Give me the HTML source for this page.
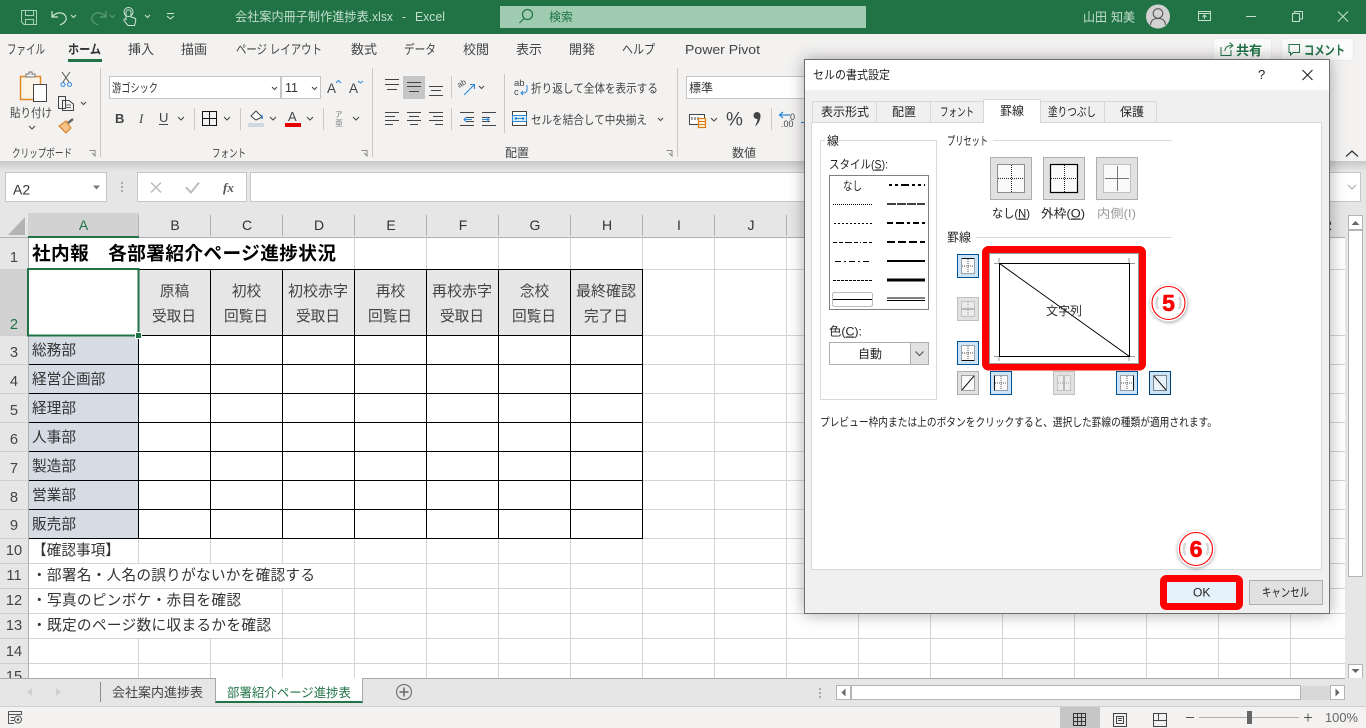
<!DOCTYPE html>
<html lang="ja"><head><meta charset="utf-8"><title>会社案内冊子制作進捗表.xlsx - Excel</title>
<style>
html,body{margin:0;padding:0;width:1366px;height:728px;overflow:hidden;background:#fff}
svg{display:block}
text{font-family:"Liberation Sans","Noto Sans CJK JP",sans-serif;font-size:12px;fill:#444;white-space:pre}
.c{font-size:14.67px;fill:#333}
.h{font-size:14.67px;fill:#444;text-anchor:middle}
.r{font-size:14.67px;fill:#444;text-anchor:middle}
.g{font-size:14px;fill:#333;text-anchor:middle}
.n{font-size:13px;fill:#444}
.d{font-size:12px;fill:#222}
.w{font-size:12.5px;fill:#c4dfcf}
.chev{fill:none;stroke:#444;stroke-width:1}
.ic{fill:none;stroke:#444;stroke-width:1}
</style></head><body>
<svg width="1366" height="728" viewBox="0 0 1366 728" xmlns="http://www.w3.org/2000/svg">
<defs>
<filter id="sh" x="-10%" y="-10%" width="120%" height="120%"><feGaussianBlur stdDeviation="8"/></filter>
<filter id="sh2" x="-30%" y="-30%" width="160%" height="160%"><feGaussianBlur stdDeviation="1.5"/></filter>
<linearGradient id="rs" x1="0" y1="0" x2="0" y2="1"><stop offset="0" stop-color="#000" stop-opacity=".13"/><stop offset="1" stop-color="#000" stop-opacity="0"/></linearGradient>
<clipPath id="gc"><rect x="0" y="213" width="1345" height="465"/></clipPath>
<symbol id="mini" viewBox="0 0 22 24" width="22" height="24">
<rect x="4.5" y="4.5" width="13" height="15" fill="#fafafa" stroke="#555" stroke-width="1" stroke-dasharray="1 1"/>
<path d="M11 5V19M5 12H17" stroke="#555" stroke-width="1" stroke-dasharray="1 1" fill="none"/>
</symbol>
</defs>

<!-- base -->
<rect width="1366" height="728" fill="#fff"/>
<rect y="0" width="1366" height="34" fill="#217346"/>
<rect y="34" width="1366" height="127" fill="#f3f2f1"/>
<rect y="161" width="1366" height="52" fill="#e6e6e6"/>
<rect y="161" width="1366" height="10" fill="url(#rs)"/>

<!-- title bar -->
<g fill="none" stroke="#a9d2ba" stroke-width="1">
<path d="M21.5 10.5H36.5V24.5H24L21.5 22Z"/><path d="M25.5 10.5V15.5H33.5V10.5M25.5 24.5V19.5H33.5V24.5"/>
<path d="M52 11V17H58M52.5 16.5C56 12 63 11.5 65.5 16C67.5 19.5 65 23 60 25" stroke="#d0e5d8" stroke-width="1.2"/>
<path d="M71 15L73.5 17.5L76 15" stroke="#d0e5d8"/>
<path d="M106 11V17H100M105.5 16.5C102 12 95 11.5 92.5 16C90.5 19.5 93 23 98 25" stroke="#5d9b78" stroke-width="1.2"/>
<path d="M110 15L112.5 17.5L115 15" stroke="#5d9b78"/>
<path d="M126 16V12.5C126 9 131 9 131 12.5V17L134.5 18C136 18.5 136 20 135.5 22L134.5 25.5H128L124 20.5C123.5 19 125 18.5 126 19.5Z" stroke="#d0e5d8"/>
<circle cx="128.5" cy="12" r="4.5" stroke="#d0e5d8"/>
<path d="M145 15L147.5 17.5L150 15" stroke="#d0e5d8"/>
<path d="M167 13.5H174M167 16L170.5 19L174 16" stroke="#d0e5d8"/>
</g>
<text x="235" y="21" class="w" textLength="158" lengthAdjust="spacingAndGlyphs">会社案内冊子制作進捗表.xlsx</text>
<text x="402" y="21" class="w">-</text>
<text x="415" y="21" class="w" textLength="30" lengthAdjust="spacingAndGlyphs">Excel</text>
<rect x="500" y="6" width="366" height="22" fill="#9fcbb1"/>
<circle cx="527.5" cy="14.5" r="5" fill="none" stroke="#217346" stroke-width="1.2"/><path d="M524 18.5L519.5 23" stroke="#217346" stroke-width="1.2"/>
<text x="549" y="21" font-size="12" style="fill:#217346">検索</text>
<text x="1083" y="21.5" class="w" textLength="24" lengthAdjust="spacingAndGlyphs">山田</text>
<text x="1111" y="21.5" class="w" textLength="24" lengthAdjust="spacingAndGlyphs">知美</text>
<circle cx="1158" cy="16.5" r="12" fill="#d2d2d2"/>
<circle cx="1158" cy="13.5" r="4.8" fill="none" stroke="#555" stroke-width="1.1"/><path d="M1150.5 25C1151 19.5 1154 18.5 1158 18.5C1162 18.5 1165 19.5 1165.5 25" fill="none" stroke="#555" stroke-width="1.1"/>
<g fill="none" stroke="#c4dfcf">
<path d="M1198.5 11.5H1210.5V20.5H1198.5ZM1198.5 13.5H1210.5M1204.5 19V15M1202.5 17L1204.5 15L1206.5 17"/>
<path d="M1246 16.5H1256"/>
<path d="M1292.5 13.5H1299.5V21.5H1292.5ZM1294.5 13.5V11.5H1302.5V19H1299.5"/>
<path d="M1338 11.5L1348 21.5M1348 11.5L1338 21.5"/>
</g>

<!-- ribbon tabs -->
<text x="7" y="54" class="n" textLength="38" lengthAdjust="spacingAndGlyphs">ファイル</text>
<text x="68" y="54" class="n" textLength="33" lengthAdjust="spacingAndGlyphs" style="font-weight:700;fill:#333">ホーム</text>
<rect x="68" y="59" width="34" height="3" fill="#217346"/>
<text x="128" y="54" class="n">挿入</text>
<text x="181" y="54" class="n">描画</text>
<text x="236" y="54" class="n" textLength="86" lengthAdjust="spacingAndGlyphs">ページ レイアウト</text>
<text x="351" y="54" class="n">数式</text>
<text x="404" y="54" class="n" textLength="32" lengthAdjust="spacingAndGlyphs">データ</text>
<text x="463" y="54" class="n">校閲</text>
<text x="516" y="54" class="n">表示</text>
<text x="569" y="54" class="n">開発</text>
<text x="622" y="54" class="n" textLength="33" lengthAdjust="spacingAndGlyphs">ヘルプ</text>
<text x="685" y="54" class="n" textLength="75" lengthAdjust="spacingAndGlyphs">Power Pivot</text>
<rect x="1213.5" y="38.5" width="58" height="22" rx="1" fill="#fbfbfb" stroke="#ebebeb"/>
<rect x="1281.5" y="38.5" width="72" height="22" rx="1" fill="#fbfbfb" stroke="#ebebeb"/>
<path d="M1221 47V55.5H1231V50M1225 51C1225 47 1228 45.5 1232 45.5M1229.5 42.5L1233 45.5L1229.5 48.5" fill="none" stroke="#217346"/>
<text x="1236" y="55" class="n" style="font-weight:700;fill:#217346">共有</text>
<path d="M1289 44.5H1299.5V52.5H1293L1290.5 55V52.5H1289Z" fill="none" stroke="#217346"/>
<text x="1304" y="55" class="n" textLength="41" lengthAdjust="spacingAndGlyphs" style="font-weight:700;fill:#217346">コメント</text>

<!-- ribbon separators -->
<g stroke="#c8c8c8"><path d="M100.5 68V157M372.5 68V157M677.5 68V157"/><path d="M194.5 108V130M240.5 108V130M323.5 108V130M451.5 76V98M451.5 108V130M504.5 74V133M771.5 108V130"/></g>

<!-- clipboard -->
<rect x="20.5" y="76.5" width="20" height="23" fill="#fdf3e6" stroke="#e08a26" stroke-width="1.5"/>
<path d="M26 77V74H29V72H32V74H35V77Z" fill="#f3f2f1" stroke="#777"/>
<rect x="33.5" y="84.5" width="13" height="17" fill="#fff" stroke="#444"/>
<text x="10" y="117" style="font-size:12px" textLength="42" lengthAdjust="spacingAndGlyphs">貼り付け</text>
<path d="M29 126L32 129L35 126" class="chev"/>
<text x="12" y="157" style="font-size:11.5px" textLength="60" lengthAdjust="spacingAndGlyphs">クリップボード</text>
<path d="M62 72L69 82M70 72L63 82" stroke="#555" fill="none"/><circle cx="63" cy="84.5" r="2" fill="none" stroke="#2b88d8"/><circle cx="69.5" cy="84.5" r="2" fill="none" stroke="#2b88d8"/>
<path d="M58.5 96.5H65.5V108.5H58.5Z M62.5 100.5H69L73.5 104V110.5H62.5Z" fill="#f3f2f1" stroke="#444"/><path d="M65 105H71M65 107.5H71" stroke="#666"/>
<path d="M81 102L83.5 104.5L86 102" class="chev"/>
<path d="M59 126L66 121L71 128L66 133Z" fill="#f2c185" stroke="#d9791c"/><path d="M68 123L73 119" stroke="#666" stroke-width="2.5"/>
<path d="M89.5 150.5H95V156M92 153L95.5 156.5" fill="none" stroke="#888"/>

<!-- font -->
<rect x="109.5" y="76.5" width="171" height="22" fill="#fff" stroke="#c6c6c6"/>
<rect x="281.5" y="76.5" width="39" height="22" fill="#fff" stroke="#c6c6c6"/>
<text x="112" y="92" style="font-size:12px;fill:#333" textLength="46" lengthAdjust="spacingAndGlyphs">游ゴシック</text>
<text x="285" y="92" style="font-size:12.5px;fill:#333">11</text>
<path d="M272 87L274.5 89.5L277 87M312 87L314.5 89.5L317 87" class="chev"/>
<text x="327" y="93" style="font-size:13.5px">A</text><path d="M336 83L338.5 80.5L341 83" fill="none" stroke="#2b88d8"/>
<text x="349" y="93" style="font-size:13.5px">A</text><path d="M358 81L360.5 83L363 81" fill="none" stroke="#2b88d8"/>
<text x="115" y="123" style="font-size:13px;font-weight:700">B</text>
<text x="139" y="123" style="font-family:'Liberation Serif',serif;font-size:13px;font-style:italic">I</text>
<text x="159" y="122" style="font-size:13px">U</text><path d="M159 124.5H168" stroke="#444"/>
<path d="M178 117L181 120L184 117M224 117L227 120L230 117M270 117L273 120L276 117M307 117L310 120L313 117M353 117L356 120L359 117" class="chev"/>
<path d="M202.5 111.5H216.5V125.5H202.5ZM209.5 111.5V125.5M202.5 118.5H216.5" fill="none" stroke="#111"/>
<path d="M251 116L256 111L262 117L256 120Z" fill="#fff" stroke="#444"/><path d="M262 115V119" stroke="#2b88d8" stroke-width="1.5"/>
<rect x="248" y="123" width="16" height="4" fill="#cfd8e1"/>
<text x="288" y="121" style="font-size:13px">A</text><rect x="285" y="123" width="16" height="4" fill="#e60000"/>
<text x="335" y="117" style="font-size:7.5px;fill:#777">ア</text><text x="335" y="126" style="font-size:8px;fill:#888">亜</text>
<text x="212" y="157" style="font-size:11.5px" textLength="34" lengthAdjust="spacingAndGlyphs">フォント</text>
<path d="M361.5 150.5H367V156M364 153L367.5 156.5" fill="none" stroke="#888"/>

<!-- alignment -->
<rect x="403" y="76" width="22" height="23" fill="#c6c6c6"/>
<g stroke="#444" fill="none">
<path d="M385 79.5H399M385 84.5H399M387 89.5H397"/>
<path d="M407 82.5H421M407 86.5H421M409 91.5H419"/>
<path d="M429 86.5H443M431 90.5H441M429 95.5H443"/>
<path d="M385 112.5H399M385 116.5H395M385 120.5H399M385 124.5H393"/>
<path d="M407 112.5H421M409 116.5H419M407 120.5H421M410 124.5H418"/>
<path d="M429 112.5H443M433 116.5H443M429 120.5H443M435 124.5H443"/>
<path d="M460 112.5H474M466 117.5H474M466 121.5H474M460 125.5H474"/>
<path d="M482 112.5H496M482 117.5H490M482 121.5H490M482 125.5H496"/>
<path d="M479 86L481.5 88.5L484 86M658 118L660.5 120.5L663 118"/>
</g>
<path d="M472 119.5H464M466.5 117L464 119.5L466.5 122M482 119.5H489M486.5 117L489 119.5L486.5 122" stroke="#2b88d8" fill="none"/>
<text x="459" y="88" style="font-size:8px;fill:#444" transform="rotate(-30 459 88)">ab</text>
<path d="M464 95L474 85M470 84.5H474.5V89" fill="none" stroke="#2b88d8" stroke-width="1.1"/>
<text x="514" y="86" style="font-size:9.5px">ab</text><text x="514" y="95" style="font-size:9.5px">c</text>
<path d="M527 85V90C527 93 524 93 521 93M523 91L521 93L523 95" fill="none" stroke="#2b88d8"/>
<text x="531" y="92.5" style="font-size:12px" textLength="127" lengthAdjust="spacingAndGlyphs">折り返して全体を表示する</text>
<rect x="512.5" y="111.5" width="14" height="14" fill="#fff" stroke="#444"/><rect x="512.5" y="115.5" width="14" height="6" fill="#e2eff9" stroke="#2b88d8"/><path d="M515 118.5H524M516.5 117L515 118.5L516.5 120M522.5 117L524 118.5L522.5 120" stroke="#2b88d8" fill="none"/>
<text x="531" y="124" style="font-size:12px" textLength="116" lengthAdjust="spacingAndGlyphs">セルを結合して中央揃え</text>
<text x="505" y="157" style="font-size:12px">配置</text>
<path d="M666.5 150.5H672V156M669 153L672.5 156.5" fill="none" stroke="#888"/>

<!-- number -->
<rect x="686.5" y="76.5" width="130" height="22" fill="#fff" stroke="#c6c6c6"/>
<text x="689" y="92" style="font-size:12px;fill:#333">標準</text>
<rect x="689.5" y="114.5" width="15" height="10" fill="#fff" stroke="#444"/><path d="M692 117V120M695 117V120M698 117V120" stroke="#444"/>
<rect x="698.5" y="118.5" width="7" height="9" fill="#fdf3e6" stroke="#e07b10" stroke-width="1.2"/><path d="M699 121.5H705M699 124.5H705" stroke="#e07b10"/>
<path d="M711 118L714 121L717 118" class="chev"/>
<text x="726" y="125.500" style="font-size:19px;fill:#444">%</text>
<circle cx="757" cy="115.500" r="3.500" fill="#444"/><path d="M760.500 115.500C760.500 120 758.500 124 755 126.500C756.500 123 757.500 121 757.500 118.500Z" fill="#444"/>
<path d="M779 115H790M783 112L779.500 115L783 118" fill="none" stroke="#2b88d8" stroke-width="1.2"/>
<text x="790" y="120" style="font-size:9px">0</text><text x="781" y="127" style="font-size:9px">.00</text>
<path d="M801 122.500H804" stroke="#2b88d8"/>
<text x="732" y="157" style="font-size:12px">数値</text>
<path d="M1346 156.500L1352 151L1358 156.500" fill="none" stroke="#333" stroke-width="1.2"/>

<!-- formula bar -->
<rect x="5.5" y="172.5" width="101" height="29" fill="#fff" stroke="#c6c6c6"/>
<text x="13" y="194.5" style="font-size:14px;fill:#333">A2</text>
<path d="M93 185.5H100L96.5 189.5Z" fill="#777"/>
<g fill="#aaa"><rect x="121" y="182" width="2" height="2"/><rect x="121" y="186" width="2" height="2"/><rect x="121" y="190" width="2" height="2"/></g>
<rect x="137.5" y="172.5" width="109" height="29" fill="#fff" stroke="#c6c6c6"/>
<path d="M151 182.5L161 192.5M161 182.5L151 192.5" stroke="#bdbdbd" stroke-width="1.5"/>
<path d="M186 187.5L191 192.5L199 182.5" fill="none" stroke="#bdbdbd" stroke-width="2"/>
<text x="223" y="192" style="font-family:'Liberation Serif',serif;font-style:italic;font-weight:700;font-size:13px;fill:#555">fx</text>
<rect x="250.5" y="172.5" width="1110" height="29" fill="#fff" stroke="#c6c6c6"/>
<path d="M1348 185L1352 189L1356 185" fill="none" stroke="#bbb" stroke-width="1.5"/>

<!-- sheet -->
<g clip-path="url(#gc)">
<rect x="0" y="213" width="1345" height="25" fill="#e6e6e6"/>
<rect x="0" y="238" width="28" height="440" fill="#e6e6e6"/>
<polygon points="8,235 25,235 25,217" fill="#b4b4b4"/>
<rect x="28" y="213" width="111" height="23" fill="#d2d2d2"/>
<rect x="0" y="269" width="28" height="67" fill="#d2d2d2"/>
<rect x="139" y="269" width="504" height="66" fill="#e7e6e6"/>
<rect x="28" y="336" width="110" height="202" fill="#d6dce4"/>

<!-- grid -->
<g stroke="#d4d4d4" fill="none">
<path d="M138.5 538V563M138.5 638V678M210.5 538V563M210.5 638V678M282.5 538V563M282.5 588V678"/>
<path d="M354.5 238V678M426.5 238V678M498.5 238V678M570.5 238V678M642.5 238V678M714.5 238V678M786.5 238V678M858.5 238V678M930.5 238V678M1002.5 238V678M1074.5 238V678M1146.5 238V678M1218.5 238V678M1290.5 238V678"/>
<path d="M28 269.5H1345M28 335.5H1345M28 364.5H1345M28 393.5H1345M28 422.5H1345M28 451.5H1345M28 480.5H1345M28 509.5H1345M28 538.5H1345M28 563.5H1345M28 588.5H1345M28 613.5H1345M28 638.5H1345M28 663.5H1345"/>
</g>
<g stroke="#000" fill="none">
<path d="M138.5 269V539M210.5 269V539M282.5 269V539M354.5 269V539M426.5 269V539M498.5 269V539M570.5 269V539M642.5 269V539"/>
<path d="M138 269.5H643M28 335.5H643M28 364.5H643M28 393.5H643M28 422.5H643M28 451.5H643M28 480.5H643M28 509.5H643M28 538.5H643"/>
</g>
<!-- header lines -->
<g stroke="#b0b0b0" fill="none">
<path d="M138.5 215V236M210.5 215V236M282.5 215V236M354.5 215V236M426.5 215V236M498.5 215V236M570.5 215V236M642.5 215V236M714.5 215V236M786.5 215V236M858.5 215V236M930.5 215V236M1002.5 215V236M1074.5 215V236M1146.5 215V236M1218.5 215V236M1290.5 215V236"/>
<path d="M0 237.5H1345M28.5 237V678"/>
</g>
<path d="M0 269.5H28M0 335.5H28M0 364.5H28M0 393.5H28M0 422.5H28M0 451.5H28M0 480.5H28M0 509.5H28M0 538.5H28M0 563.5H28M0 588.5H28M0 613.5H28M0 638.5H28M0 663.5H28" stroke="#cfcfcf" fill="none"/>
<rect x="28" y="236" width="111" height="2" fill="#217346"/>

<!-- column letters -->
<text x="83.5" y="230" class="g" style="fill:#217346">A</text>
<text x="175" y="230" class="g">B</text><text x="247" y="230" class="g">C</text><text x="319" y="230" class="g">D</text><text x="391" y="230" class="g">E</text><text x="463" y="230" class="g">F</text><text x="535" y="230" class="g">G</text><text x="607" y="230" class="g">H</text><text x="679" y="230" class="g">I</text><text x="751" y="230" class="g">J</text><text x="823" y="230" class="g">K</text><text x="895" y="230" class="g">L</text><text x="967" y="230" class="g">M</text><text x="1039" y="230" class="g">N</text><text x="1111" y="230" class="g">O</text><text x="1183" y="230" class="g">P</text><text x="1255" y="230" class="g">Q</text><text x="1327" y="230" class="g">R</text>

<!-- row numbers -->
<text x="14" y="262" class="r">1</text>
<text x="14" y="329" class="r" style="fill:#217346">2</text>
<text x="14" y="357" class="r">3</text><text x="14" y="386" class="r">4</text><text x="14" y="415" class="r">5</text><text x="14" y="444" class="r">6</text><text x="14" y="473" class="r">7</text><text x="14" y="502" class="r">8</text><text x="14" y="530" class="r">9</text>
<text x="14" y="555" class="r">10</text><text x="14" y="580" class="r">11</text><text x="14" y="605" class="r">12</text><text x="14" y="630" class="r">13</text><text x="14" y="656" class="r">14</text><text x="14" y="681" class="r">15</text>

<!-- cells -->
<text x="32" y="260" style="font-size:18.67px;font-weight:700;fill:#000" textLength="304" lengthAdjust="spacing">社内報　各部署紹介ページ進捗状況</text>
<text x="174.5" y="296" class="h">原稿</text><text x="174" y="321" class="h">受取日</text>
<text x="246.5" y="296" class="h">初校</text><text x="246" y="321" class="h">回覧日</text>
<text x="318" y="296" class="h" textLength="60" lengthAdjust="spacingAndGlyphs">初校赤字</text><text x="318" y="321" class="h">受取日</text>
<text x="390.5" y="296" class="h">再校</text><text x="390" y="321" class="h">回覧日</text>
<text x="462" y="296" class="h" textLength="60" lengthAdjust="spacingAndGlyphs">再校赤字</text><text x="462" y="321" class="h">受取日</text>
<text x="534.5" y="296" class="h">念校</text><text x="534" y="321" class="h">回覧日</text>
<text x="606" y="296" class="h" textLength="60" lengthAdjust="spacingAndGlyphs">最終確認</text><text x="606" y="321" class="h">完了日</text>
<text x="32" y="355" class="c">総務部</text><text x="32" y="384" class="c">経営企画部</text><text x="32" y="413" class="c">経理部</text><text x="32" y="442" class="c">人事部</text><text x="32" y="471" class="c">製造部</text><text x="32" y="500" class="c">営業部</text><text x="32" y="529" class="c">販売部</text>
<text x="32" y="555" class="c">【確認事項】</text>
<text x="32" y="580" class="c" textLength="283" lengthAdjust="spacing">・部署名・人名の誤りがないかを確認する</text>
<text x="32" y="605" class="c" textLength="209" lengthAdjust="spacing">・写真のピンボケ・赤目を確認</text>
<text x="32" y="630" class="c" textLength="239" lengthAdjust="spacing">・既定のページ数に収まるかを確認</text>

<!-- selection -->
<rect x="28" y="269" width="110.5" height="66.5" fill="#fff" fill-opacity="1" stroke="#217346" stroke-width="2"/>
<rect x="135.5" y="332.5" width="6" height="6" fill="#217346" stroke="#fff"/>
</g>

<!-- vertical scrollbar -->
<rect x="1345" y="205" width="21" height="473" fill="#e6e6e6"/>
<rect x="1348.5" y="215.5" width="14" height="14" fill="#fff" stroke="#b4b4b4"/><path d="M1351.5 225H1359.5L1355.5 221Z" fill="#666"/>
<rect x="1348.5" y="230.5" width="14" height="346" fill="#fff" stroke="#b4b4b4"/>
<rect x="1348.5" y="664.5" width="14" height="14" fill="#fff" stroke="#b4b4b4"/><path d="M1351.5 669H1359.5L1355.5 673Z" fill="#666"/>

<!-- sheet tabs -->
<rect x="0" y="678" width="1366" height="29" fill="#e6e6e6"/>
<path d="M0 678.5H1345" stroke="#a8a8a8"/>
<path d="M32 688V696L27 692ZM56 688V696L61 692Z" fill="#cfcfcf"/>
<path d="M100.5 682V702" stroke="#8a8a8a"/>
<text x="112" y="697" style="font-size:13px;fill:#444">会社案内進捗表</text>
<rect x="215" y="678" width="147" height="23" fill="#fff"/>
<rect x="215" y="701" width="148" height="2" fill="#217346"/>
<path d="M215.5 678V702M362.5 678V702" stroke="#a8a8a8"/>
<text x="227" y="697" style="font-size:12.5px;fill:#217346" textLength="124" lengthAdjust="spacingAndGlyphs">部署紹介ページ進捗表</text>
<circle cx="404" cy="692" r="7.5" fill="none" stroke="#777" stroke-width="1.2"/><path d="M399.5 692H408.5M404 687.5V696.5" stroke="#666" stroke-width="1.5"/>
<g fill="#aaa"><rect x="819" y="688" width="2" height="2"/><rect x="819" y="692" width="2" height="2"/><rect x="819" y="696" width="2" height="2"/></g>
<rect x="836.5" y="685.5" width="14" height="14" fill="#fff" stroke="#b4b4b4"/><path d="M845.5 688.5V696.5L841.5 692.5Z" fill="#666"/>
<rect x="851.5" y="685.5" width="449" height="14" fill="#fff" stroke="#b4b4b4"/>
<rect x="1301" y="686" width="29" height="14" fill="#d8d8d8"/>
<rect x="1330.5" y="685.5" width="14" height="14" fill="#fff" stroke="#b4b4b4"/><path d="M1335.5 688.5V696.5L1339.5 692.5Z" fill="#666"/>

<!-- status bar -->
<rect x="0" y="707" width="1366" height="21" fill="#f3f2f1"/>
<path d="M0 706.5H1366" stroke="#cfcfcf"/>
<path d="M8.5 711.5H21.5V715M8.5 711.5V723.5H14M8.5 714.5H21.5M10.5 717.5H14M10.5 720.5H14" fill="none" stroke="#555"/><circle cx="18" cy="719.5" r="3.5" fill="none" stroke="#555"/><circle cx="18" cy="719.5" r="1.3" fill="#555"/>
<rect x="1060" y="707" width="40" height="21" fill="#c6c6c6"/>
<path d="M1073.5 713.5H1085.5V725.5H1073.5ZM1077.5 713.5V725.5M1081.5 713.5V725.5M1073.5 717.5H1085.5M1073.5 721.5H1085.5" fill="none" stroke="#333"/>
<path d="M1113.5 713.5H1126.5V726.5H1113.5ZM1116.5 716.5H1123.5V723.5H1116.5ZM1118 718.5H1122M1118 720.5H1122" fill="none" stroke="#444"/>
<path d="M1153.5 713.5H1166.5V726.5H1153.5ZM1153.5 720.5H1166.5M1158.5 713.5V720.5" fill="none" stroke="#444"/>
<path d="M1186 717.5H1194M1304 717.5H1312M1308 713.5V721.5" stroke="#555" fill="none"/>
<path d="M1199 717.5H1299" stroke="#b0b0b0"/><rect x="1247" y="711" width="5" height="13" fill="#666"/>
<text x="1325" y="722" style="font-size:12.5px;fill:#666" textLength="33" lengthAdjust="spacingAndGlyphs">100%</text>

<!-- dialog -->
<rect x="804" y="59" width="526" height="555" fill="#000" fill-opacity=".33" filter="url(#sh)"/>
<rect x="804.5" y="59.5" width="525" height="554" fill="#f0f0f0" stroke="#6e6e6e"/>
<rect x="805" y="60" width="524" height="30" fill="#fff"/>
<text x="813" y="79" class="d" textLength="77" lengthAdjust="spacingAndGlyphs">セルの書式設定</text>
<text x="1258" y="79" style="font-size:13px;fill:#222">?</text>
<path d="M1302.5 70L1312.5 80M1312.5 70L1302.5 80" stroke="#222" stroke-width="1.1"/>

<rect x="811.5" y="122.5" width="510" height="447" fill="#fff" stroke="#d9d9d9"/>
<g fill="#f0f0f0" stroke="#d9d9d9">
<rect x="812.5" y="101.5" width="64" height="21"/><rect x="876.5" y="101.5" width="54" height="21"/><rect x="930.5" y="101.5" width="53" height="21"/><rect x="1040.5" y="101.5" width="64" height="21"/><rect x="1104.5" y="101.5" width="52" height="21"/>
</g>
<path d="M983.5 123V99.5H1040.5V123" fill="#fff" stroke="#d9d9d9"/>
<rect x="984" y="120" width="56" height="4" fill="#fff"/>
<text x="821" y="116" class="d">表示形式</text>
<text x="892" y="116" class="d">配置</text>
<text x="940" y="116" class="d" textLength="34" lengthAdjust="spacingAndGlyphs">フォント</text>
<text x="1000" y="115" class="d">罫線</text>
<text x="1048" y="116" class="d" textLength="48" lengthAdjust="spacingAndGlyphs">塗りつぶし</text>
<text x="1120" y="116" class="d">保護</text>

<!-- group 線 -->
<rect x="820.5" y="140.5" width="116" height="259" fill="none" stroke="#d9d9d9"/>
<rect x="825" y="134" width="14" height="13" fill="#fff"/>
<text x="827" y="145" class="d">線</text>
<text x="829" y="168.5" class="d" textLength="59" lengthAdjust="spacingAndGlyphs">スタイル(<tspan style="text-decoration:underline">S</tspan>):</text>
<rect x="829.5" y="175.5" width="99" height="134" fill="#fff" stroke="#808080"/>
<text x="843" y="190" class="d" textLength="19" lengthAdjust="spacingAndGlyphs">なし</text>
<g fill="none" stroke="#000">
<path d="M833 204.5H872" stroke-dasharray="1 1"/>
<path d="M834 223.5H872" stroke-dasharray="2 2"/>
<path d="M833 242.5H872" stroke-dasharray="4 2 4 2 7 2 4 2 1 2"/>
<path d="M835 261.5H872" stroke-dasharray="6 3 2 3"/>
<path d="M833 280.5H872" stroke-dasharray="3 1"/>
<rect x="832.5" y="292.5" width="40" height="14" rx="2" stroke="#777" stroke-dasharray="1 1"/>
<path d="M833 299.5H872"/>
<path d="M889 185H925" stroke-width="2" stroke-dasharray="3 3 3 3 8 3 3 3 3"/>
<path d="M887 204H925" stroke-width="1.5" stroke-dasharray="9 1"/>
<path d="M887 223H925" stroke-width="2" stroke-dasharray="6 3 8 3 3 3"/>
<path d="M887 242H925" stroke-width="2" stroke-dasharray="8 3"/>
<path d="M887 261H925" stroke-width="2"/>
<path d="M887 280H925" stroke-width="3"/>
<path d="M887 298H925M887 300.5H925"/>
</g>
<text x="829" y="335.5" class="d" textLength="33" lengthAdjust="spacingAndGlyphs">色(<tspan style="text-decoration:underline">C</tspan>):</text>
<rect x="829.5" y="342.5" width="99" height="22" fill="#fff" stroke="#adadad"/>
<rect x="911" y="343" width="17" height="21" fill="#e1e1e1"/><path d="M910.5 343V364" stroke="#adadad"/>
<path d="M915.5 351.5L919.5 355.5L923.5 351.5" fill="none" stroke="#555" stroke-width="1.2"/>
<text x="858" y="358" class="d">自動</text>

<!-- presets -->
<path d="M993 140.5H1172M976 237.5H1172" stroke="#d9d9d9"/>
<text x="947" y="145" class="d" textLength="41" lengthAdjust="spacingAndGlyphs">プリセット</text>
<text x="947" y="241.5" class="d">罫線</text>
<g fill="#e1e1e1" stroke="#adadad">
<rect x="990.5" y="157.5" width="41" height="42"/><rect x="1043.5" y="157.5" width="41" height="42"/><rect x="1096.5" y="157.5" width="41" height="42"/>
</g>
<g fill="#fafafa"><rect x="997" y="164" width="28" height="29"/><rect x="1050" y="164" width="28" height="29"/><rect x="1103" y="164" width="28" height="29"/></g>
<g fill="none" stroke="#222" stroke-dasharray="1 1">
<rect x="997.5" y="164.5" width="27" height="28"/>
<path d="M1011.5 165V192M998 178.5H1024M1064.5 165V192M1051 178.5H1077"/>
</g>
<rect x="1050.5" y="164.5" width="27" height="28" fill="none" stroke="#000" stroke-width="1.2"/>
<rect x="1103.5" y="164.5" width="27" height="28" fill="none" stroke="#888" stroke-dasharray="1 1"/>
<path d="M1117.5 166V191M1105 178.5H1129" stroke="#777" fill="none"/>
<text x="992" y="217.5" class="d" textLength="38" lengthAdjust="spacingAndGlyphs">なし(<tspan style="text-decoration:underline">N</tspan>)</text>
<text x="1041" y="217.5" class="d" textLength="44" lengthAdjust="spacingAndGlyphs">外枠(<tspan style="text-decoration:underline">O</tspan>)</text>
<text x="1097" y="217.5" class="d" style="fill:#9a9a9a" textLength="39" lengthAdjust="spacingAndGlyphs">内側(I)</text>

<!-- preview -->
<rect x="985.5" y="249.5" width="157" height="117.5" rx="3" fill="#fff" stroke="#f00" stroke-width="7"/>
<rect x="989.5" y="253.5" width="149" height="110" fill="#fff" stroke="#9a9a9a"/>
<path d="M999 258V263M994 263.5H999M1129 258V263M1130 263.5H1135M999 356V361M994 356.5H999M1129 356V361M1130 356.5H1135" stroke="#999" fill="none"/>
<rect x="999.5" y="263.5" width="130" height="93" fill="none" stroke="#000"/>
<path d="M999.5 263.5L1129.5 356.5" stroke="#000" fill="none"/>
<text x="1046" y="315" class="d" style="fill:#333">文字列</text>

<!-- border buttons -->
<g stroke-width="1">
<rect x="957.5" y="254.5" width="21" height="23" fill="#cce4f7" stroke="#005499"/>
<rect x="957.5" y="297.5" width="21" height="23" fill="#e1e1e1" stroke="#bfbfbf"/>
<rect x="957.5" y="341.5" width="21" height="23" fill="#cce4f7" stroke="#005499"/>
<rect x="957.5" y="371.5" width="21" height="23" fill="#e1e1e1" stroke="#adadad"/>
<rect x="990.5" y="371.5" width="21" height="23" fill="#cce4f7" stroke="#005499"/>
<rect x="1053.5" y="371.5" width="21" height="23" fill="#e1e1e1" stroke="#bfbfbf"/>
<rect x="1116.5" y="371.5" width="21" height="23" fill="#cce4f7" stroke="#005499"/>
<rect x="1149.5" y="371.5" width="21" height="23" fill="#cce4f7" stroke="#003f73"/>
</g>
<use href="#mini" x="957" y="254"/><use href="#mini" x="957" y="297" opacity=".45"/><use href="#mini" x="957" y="341"/>
<use href="#mini" x="990" y="371"/><use href="#mini" x="1053" y="371" opacity=".45"/><use href="#mini" x="1116" y="371"/>
<rect x="961.5" y="375.5" width="13" height="15" fill="#fafafa" stroke="#555" stroke-dasharray="1 1"/>
<rect x="1153.5" y="375.5" width="13" height="15" fill="#e7f1f9" stroke="#222" stroke-dasharray="1 1"/>
<g fill="none" stroke="#111">
<path d="M961.5 258.5H974.5M961.5 360.5H974.5M994.5 375.5V390.5M1133.5 375.5V390.5"/>
<path d="M962 390L974 376"/>
<path d="M1154 376L1166 390"/>
</g>
<path d="M961.5 309H974.5M1064 376V390" stroke="#888" fill="none"/>

<text x="820" y="426" style="font-size:11.5px;fill:#222" textLength="397" lengthAdjust="spacingAndGlyphs">プレビュー枠内または上のボタンをクリックすると、選択した罫線の種類が適用されます。</text>

<!-- buttons -->
<rect x="1163.5" y="578.5" width="76" height="28" rx="3" fill="#e5f1fb" stroke="#f00" stroke-width="7"/>
<text x="1193" y="596.5" style="font-size:12px;fill:#222">OK</text>
<rect x="1249.5" y="580.5" width="73" height="24" fill="#e1e1e1" stroke="#adadad"/>
<text x="1262" y="596.5" class="d" textLength="47" lengthAdjust="spacingAndGlyphs">キャンセル</text>

<!-- callouts -->
<circle cx="1169" cy="304" r="19" fill="#000" fill-opacity=".3" filter="url(#sh2)"/>
<circle cx="1168.5" cy="303" r="18.5" fill="#fff"/>
<circle cx="1168.5" cy="303" r="16.5" fill="#fff" stroke="#f00" stroke-width="1.1"/>
<path d="M1158 297A13 13 0 0 0 1158 309M1179 297A13 13 0 0 1 1179 309" fill="none" stroke="#d8d8d8" stroke-width="2.5"/>
<text x="1168.5" y="311" style="font-size:23px;font-weight:700;fill:#f00;stroke:#f00;stroke-width:.6;text-anchor:middle">5</text>
<circle cx="1196" cy="550" r="19" fill="#000" fill-opacity=".3" filter="url(#sh2)"/>
<circle cx="1196" cy="549" r="18.5" fill="#fff"/>
<circle cx="1196" cy="549" r="16.5" fill="#fff" stroke="#f00" stroke-width="1.1"/>
<path d="M1185.5 543A13 13 0 0 0 1185.5 555M1206.5 543A13 13 0 0 1 1206.5 555" fill="none" stroke="#d8d8d8" stroke-width="2.5"/>
<text x="1196" y="557" style="font-size:23px;font-weight:700;fill:#f00;stroke:#f00;stroke-width:.6;text-anchor:middle">6</text>
</svg>
</body></html>
